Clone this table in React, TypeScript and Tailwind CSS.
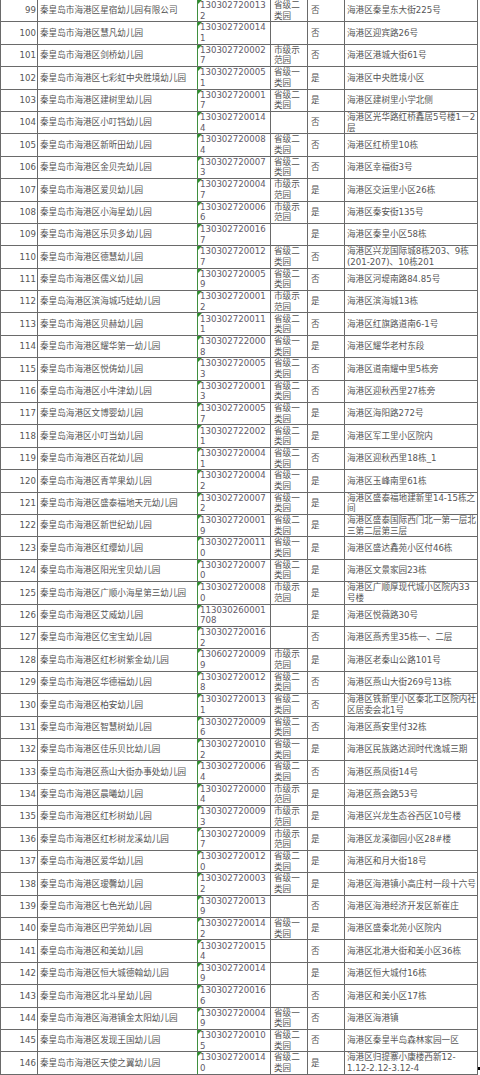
import React from "react";

type Row = [number, string, string, string, string, string];

const rows: Row[] = [
  [99, "秦皇岛市海港区星宿幼儿园有限公司", "1303027200132", "省级二类园", "否", "海港区秦皇东大街225号"],
  [100, "秦皇岛市海港区慧凡幼儿园", "1303027200141", "", "否", "海港区迎宾路26号"],
  [101, "秦皇岛市海港区剑桥幼儿园", "1303027200027", "市级示范园", "否", "海港区港城大街61号"],
  [102, "秦皇岛市海港区七彩虹中央胜境幼儿园", "1303027200051", "省级一类园", "是", "海港区中央胜境小区"],
  [103, "秦皇岛市海港区建树里幼儿园", "1303027200017", "省级二类园", "是", "海港区建树里小学北侧"],
  [104, "秦皇岛市海港区小叮铛幼儿园", "1303027200144", "", "否", "海港区光华路红桥鑫居5号楼1－2层"],
  [105, "秦皇岛市海港区新昕田幼儿园", "1303027200084", "省级二类园", "否", "海港区红桥里10栋"],
  [106, "秦皇岛市海港区金贝壳幼儿园", "1303027200073", "省级二类园", "否", "海港区幸福街3号"],
  [107, "秦皇岛市海港区爱贝幼儿园", "1303027200047", "市级示范园", "是", "海港区交运里小区26栋"],
  [108, "秦皇岛市海港区小海星幼儿园", "1303027200066", "市级示范园", "是", "海港区秦安街135号"],
  [109, "秦皇岛市海港区乐贝多幼儿园", "1303027200167", "", "是", "海港区秦皇小区58栋"],
  [110, "秦皇岛市海港区德慧幼儿园", "1303027200127", "省级二类园", "否", "海港区兴龙国际城8栋203、9栋(201-207)、10栋201"],
  [111, "秦皇岛市海港区儒义幼儿园", "1303027200059", "省级二类园", "否", "海港区河堤南路84.85号"],
  [112, "秦皇岛海港区滨海城巧娃幼儿园", "1303027200012", "市级示范园", "是", "海港区滨海城13栋"],
  [113, "秦皇岛市海港区贝赫幼儿园", "1303027200111", "省级二类园", "否", "海港区红旗路道南6-1号"],
  [114, "秦皇岛市海港区耀华第一幼儿园", "1303027220008", "省级一类园", "是", "海港区耀华老村东段"],
  [115, "秦皇岛市海港区悦俦幼儿园", "1303027200053", "省级二类园", "否", "海港区道南耀中里5栋旁"],
  [116, "秦皇岛市海港区小牛津幼儿园", "1303027200013", "省级二类园", "否", "海港区迎秋西里27栋旁"],
  [117, "秦皇岛海港区文博婴幼儿园", "1303027200057", "省级一类园", "是", "海港区海阳路272号"],
  [118, "秦皇岛海港区小叮当幼儿园", "1303027220021", "省级二类园", "是", "海港区军工里小区院内"],
  [119, "秦皇岛市海港区百花幼儿园", "1303027200041", "省级二类园", "否", "海港区迎秋西里18栋_1"],
  [120, "秦皇岛市海港区青苹果幼儿园", "1303027200042", "省级一类园", "是", "海港区玉峰南里61栋"],
  [121, "秦皇岛市海港区盛泰福地天元幼儿园", "1303027200072", "省级一类园", "是", "海港区盛泰福地建新里14-15栋之间"],
  [122, "秦皇岛市海港区新世纪幼儿园", "1303027200019", "省级二类园", "是", "海港区盛泰国际西门北一第一层北三第二层第三层"],
  [123, "秦皇岛市海港区红缨幼儿园", "1303027200110", "省级一类园", "是", "海港区盛达鑫苑小区付46栋"],
  [124, "秦皇岛市海港区阳光宝贝幼儿园", "1303027200070", "省级二类园", "是", "海港区文景家园23栋"],
  [125, "秦皇岛市海港区广顺小海星第三幼儿园", "1303027200080", "市级示范园", "是", "海港区广顺厚现代城小区院内33号楼"],
  [126, "秦皇岛市海港区艾威幼儿园", "113030260001708", "", "是", "海港区悦薇路30号"],
  [127, "秦皇岛市海港区亿宝宝幼儿园", "1303027200162", "", "否", "海港区燕秀里35栋一、二层"],
  [128, "秦皇岛市海港区红杉树紫金幼儿园", "1306027200099", "市级示范园", "是", "海港区老秦山公路101号"],
  [129, "秦皇岛市海港区华德福幼儿园", "1303027200128", "省级二类园", "否", "海港区燕山大街269号13栋"],
  [130, "秦皇岛市海港区柏安幼儿园", "1303027200131", "省级二类园", "否", "海港区铁新里小区秦北工区院内社区居委会北1号"],
  [131, "秦皇岛市海港区智慧树幼儿园", "1303027200096", "省级二类园", "否", "海港区燕安里付32栋"],
  [132, "秦皇岛市海港区佳乐贝比幼儿园", "1303027200102", "省级一类园", "是", "海港区民族路达润时代逸城三期"],
  [133, "秦皇岛市海港区燕山大街办事处幼儿园", "1303027200064", "省级二类园", "否", "海港区燕凤街14号"],
  [134, "秦皇岛市海港区晨曦幼儿园", "1303027200004", "市级示范园", "是", "海港区燕会路53号"],
  [135, "秦皇岛市海港区红杉树幼儿园", "1303027200093", "市级示范园", "是", "海港区兴龙生态谷西区10号楼"],
  [136, "秦皇岛市海港区红杉树龙溪幼儿园", "1303027200097", "市级示范园", "是", "海港区龙溪御园小区28#楼"],
  [137, "秦皇岛市海港区爱华幼儿园", "1303027200120", "省级二类园", "是", "海港区和月大街18号"],
  [138, "秦皇岛市海港区瑷馨幼儿园", "1303027200032", "省级一类园", "是", "海港区海港镇小高庄村一段十六号"],
  [139, "秦皇岛市海港区七色光幼儿园", "1303027200139", "", "否", "海港区海港经济开发区新崔庄"],
  [140, "秦皇岛市海港区巴学苑幼儿园", "1303027200142", "省级一类园", "是", "海港区盛秦北苑小区院内"],
  [141, "秦皇岛市海港区和美幼儿园", "1303027200154", "", "否", "海港区北港大街和美小区36栋"],
  [142, "秦皇岛市海港区恒大城德翰幼儿园", "1303027200149", "", "是", "海港区恒大城付16栋"],
  [143, "秦皇岛市海港区北斗星幼儿园", "1303027200166", "", "否", "海港区和美小区17栋"],
  [144, "秦皇岛市海港区海港镇金太阳幼儿园", "1303027200049", "省级一类园", "否", "海港区海港镇"],
  [145, "秦皇岛市海港区发现王国幼儿园", "1303027200105", "省级二类园", "否", "海港区秦皇半岛森林家园一区"],
  [146, "秦皇岛市海港区天使之翼幼儿园", "1303027200140", "省级二类园", "是", "海港区归提寨小康楼西新12-1.12-2.12-3.12-4"],
];

export default function App() {
  return (
    <div
      className="relative w-[480px] h-[1075px] overflow-hidden bg-white text-[8.6px] leading-[10.6px] text-[#555]"
      style={{ fontFamily: '"DejaVu Sans", "Noto Sans CJK SC", sans-serif' }}
    >
      <div className="flex flex-col w-[478px] border-l border-r border-[#6a6a6a]">
        {rows.map((r) => (
          <div key={r[0]} className="flex h-[22.4px] border-b border-[#6a6a6a]">
            <div className="w-[37px] shrink-0 flex items-center justify-end pr-[1px] border-r border-[#6a6a6a]">
              {r[0]}
            </div>
            <div className="w-[160px] shrink-0 flex items-center pl-[2px] whitespace-nowrap overflow-hidden border-r border-[#6a6a6a]">
              {r[1]}
            </div>
            <div className="relative w-[73px] shrink-0 flex items-center pl-[2px] border-r border-[#6a6a6a] text-[#615a68]">
              <span className="absolute left-[-1px] top-0 bottom-0 w-px bg-[#3f8f3f]" />
              <span className="absolute left-0 top-0 w-0 h-0 border-t-[4px] border-t-[#2f8a2f] border-r-[4px] border-r-transparent" />
              <span className="break-all">{r[2]}</span>
            </div>
            <div className="w-[37px] shrink-0 flex items-center pl-[3px] pr-[4px] border-r border-[#6a6a6a]">
              <span className="break-all">{r[3]}</span>
            </div>
            <div className="w-[37px] shrink-0 flex items-center pl-[3px] border-r border-[#6a6a6a]">
              {r[4]}
            </div>
            <div className="flex-1 min-w-0 flex items-center pl-[2px] pr-[1px]">
              <span>{r[5]}</span>
            </div>
          </div>
        ))}
      </div>
      <span className="absolute right-0 bottom-[5px] w-[2px] h-[3px] bg-black" />
    </div>
  );
}
